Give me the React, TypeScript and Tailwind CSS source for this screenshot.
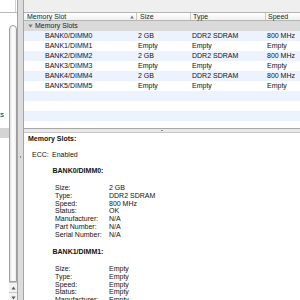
import React from 'react'

type Slot = { name: string; size: string; type: string; speed: string }

const slots: Slot[] = [
  { name: 'BANK0/DIMM0', size: '2 GB', type: 'DDR2 SDRAM', speed: '800 MHz' },
  { name: 'BANK1/DIMM1', size: 'Empty', type: 'Empty', speed: 'Empty' },
  { name: 'BANK2/DIMM2', size: '2 GB', type: 'DDR2 SDRAM', speed: '800 MHz' },
  { name: 'BANK3/DIMM3', size: 'Empty', type: 'Empty', speed: 'Empty' },
  { name: 'BANK4/DIMM4', size: '2 GB', type: 'DDR2 SDRAM', speed: '800 MHz' },
  { name: 'BANK5/DIMM5', size: 'Empty', type: 'Empty', speed: 'Empty' },
]

// Detail lines for the lower pane
const bank0: Array<[string, string]> = [
  ['Size:', '2 GB'],
  ['Type:', 'DDR2 SDRAM'],
  ['Speed:', '800 MHz'],
  ['Status:', 'OK'],
  ['Manufacturer:', 'N/A'],
  ['Part Number:', 'N/A'],
  ['Serial Number:', 'N/A'],
]

const bank1: Array<[string, string]> = [
  ['Size:', 'Empty'],
  ['Type:', 'Empty'],
  ['Speed:', 'Empty'],
  ['Status:', 'Empty'],
  ['Manufacturer:', 'Empty'],
]

function DetailGrid({ rows }: { rows: Array<[string, string]> }) {
  return (
    <div className="grid grid-cols-[54px_1fr] pl-[31px] leading-[7.75px]">
      {rows.map(([k, v]) => (
        <React.Fragment key={k}>
          <span className="h-[7.75px] whitespace-nowrap">{k}</span>
          <span className="h-[7.75px] whitespace-nowrap">{v}</span>
        </React.Fragment>
      ))}
    </div>
  )
}

function Sidebar() {
  return (
    <div className="flex w-[17px] shrink-0 flex-col bg-white">
      <div className="flex h-[13px] shrink-0 border-b border-[#b8b8b8]">
        <div className="w-[16px] border-r border-[#d0d0d0]" />
      </div>
      <div className="flex flex-1">
        {/* list column, clipped */}
        <div className="relative w-[9px] overflow-hidden">
          <div className="absolute left-0 top-[97px] flex h-[10px] w-[4px] justify-end overflow-hidden whitespace-nowrap text-[7px] leading-[10px] text-[#111]">
            <span>Memory Slots</span>
          </div>
          <div className="absolute left-0 top-[115px] h-[10px] w-[9px] bg-[#d4d4d4]" />
        </div>
        {/* scrollbar */}
        <div className="flex w-[8px] flex-col">
          <div className="h-[12px]" />
          <div className="h-[257px] rounded-t-full rounded-b-[4px] border border-[#9e9e9e] bg-gradient-to-r from-[#e4e4e4] via-white to-[#ececec]" />
          <div className="flex flex-1 flex-col items-center border-t border-[#c4c4c4] bg-[#f2f2f2]">
            <svg width="5" height="4" viewBox="0 0 5 4" className="mt-[3px]">
              <path d="M2.5 0.5 L4.5 3.5 L0.5 3.5 Z" fill="#555" />
            </svg>
            <div className="mt-[2px] h-px w-full bg-[#c8c8c8]" />
            <svg width="5" height="4" viewBox="0 0 5 4" className="mt-[3px]">
              <path d="M0.5 0.5 L4.5 0.5 L2.5 3.5 Z" fill="#555" />
            </svg>
          </div>
        </div>
      </div>
    </div>
  )
}

export default function App() {
  return (
    <div className="flex h-[300px] w-[300px] overflow-hidden bg-white font-['Liberation_Sans',Arial,sans-serif] text-[7px] text-[#111]">
      <Sidebar />

      {/* vertical splitter */}
      <div className="relative w-[7px] shrink-0 border-x border-[#a4a4a4] bg-[#dcdcdc]">
        <div className="absolute left-[2px] top-[156px] h-[2px] w-[1px] bg-[#888]" />
      </div>

      {/* main pane */}
      <div className="flex min-w-0 flex-1 flex-col">
        <div className="h-[12px] shrink-0 bg-[#efefef]" />

        {/* table header */}
        <div className="grid h-[9px] shrink-0 grid-cols-[112px_54px_75px_1fr] border-y border-[#b4b4b4] bg-gradient-to-b from-white to-[#f0f0f0] leading-[7px] text-[#222]">
          <div className="flex items-center justify-between pl-[3px] pr-[2px]">
            <span>Memory Slot</span>
            <svg width="4" height="4" viewBox="0 0 4 4">
              <path d="M2 0.5 L3.8 3.5 L0.2 3.5 Z" fill="#777" />
            </svg>
          </div>
          <div className="border-l border-[#c8c8c8] pl-[3px]">Size</div>
          <div className="border-l border-[#c8c8c8] pl-[2px]">Type</div>
          <div className="border-l border-[#c8c8c8] pl-[2px]">Speed</div>
        </div>

        {/* group row */}
        <div className="flex h-[10px] shrink-0 items-center gap-[2px] bg-[#dadada] pl-[4px] leading-[10px] text-[#222]">
          <svg width="5" height="4" viewBox="0 0 5 4">
            <path d="M0.3 0.5 L4.7 0.5 L2.5 3.7 Z" fill="#7a7a7a" />
          </svg>
          <span>Memory Slots</span>
        </div>

        {/* slot rows */}
        <div className="h-[97px] shrink-0 overflow-hidden">
          {slots.map((s, i) => (
            <div
              key={s.name}
              className={`grid h-[10px] grid-cols-[112px_54px_75px_1fr] leading-[10px] ${i % 2 === 0 ? 'bg-[#edf3fe]' : 'bg-white'}`}
            >
              <span className="pl-[21px]">{s.name}</span>
              <span className="pl-[2px]">{s.size}</span>
              <span className="pl-[2px]">{s.type}</span>
              <span className="pl-[2px]">{s.speed}</span>
            </div>
          ))}
          <div className="h-[10px] bg-[#edf3fe]" />
          <div className="h-[10px] bg-white" />
          <div className="h-[10px] bg-[#edf3fe]" />
          <div className="h-[10px] bg-white" />
        </div>

        {/* horizontal splitter */}
        <div className="flex h-[5px] shrink-0 items-center justify-center border-t border-b border-t-[#a8a8a8] border-b-[#c6c6c6] bg-[#e9e9e9]">
          <div className="h-[1px] w-[2px] bg-[#888]" />
        </div>

        {/* detail pane */}
        <div className="flex-1 overflow-hidden bg-white pt-[1.5px]">
          <div className="h-[8px] pl-[4px] font-bold leading-[8px]">Memory Slots:</div>
          <div className="mt-[8px] flex h-[8px] pl-[8px] leading-[8px]">
            <span className="w-[20px]">ECC:</span>
            <span>Enabled</span>
          </div>
          <div className="mt-[8.5px] h-[8px] pl-[28.5px] font-bold leading-[8px]">BANK0/DIMM0:</div>
          <div className="mt-[9px]">
            <DetailGrid rows={bank0} />
          </div>
          <div className="mt-[9.75px] h-[8px] pl-[28.5px] font-bold leading-[8px]">BANK1/DIMM1:</div>
          <div className="mt-[9px]">
            <DetailGrid rows={bank1} />
          </div>
        </div>
      </div>
    </div>
  )
}
